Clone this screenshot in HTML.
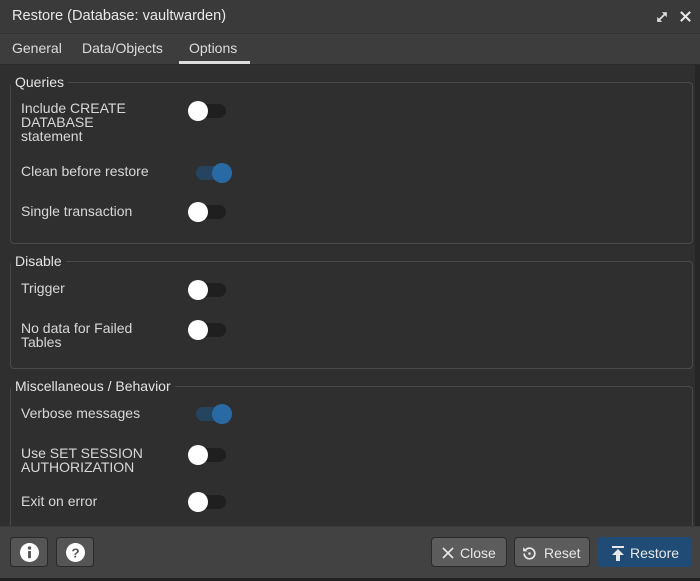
<!DOCTYPE html><html><head><style>
body{margin:0;width:700px;height:581px;background:#222;font-family:"Liberation Sans",sans-serif;color:#ddd;overflow:hidden;position:relative}
.a{position:absolute}
.fs{position:absolute;left:10px;width:681px;border:1px solid #4a4a4a;border-radius:4px}
.lg{position:absolute;background:#2f2f2f;padding:0 4px;left:0px;font-size:14px;color:#e4e4e4}
.lb{position:absolute;left:21px;font-size:14px;line-height:14px;color:#d8d8d8}
.t{position:absolute;left:190px;width:36px;height:14px;border-radius:7px;background:#1f1f1f}
.t:after{content:"";position:absolute;left:-2px;top:-3px;width:20px;height:20px;border-radius:50%;background:#fff}
.on{left:196px;background:#24445f}
.on:after{left:16px;background:#2a6aa4}
.btn{position:absolute;top:537px;height:30px;border-radius:4px;border:1px solid #2a2a2a;background:#5c5c5c;color:#e8e8e8;font-size:14px;line-height:30px;box-sizing:border-box}
</style></head><body>
<div class="a" style="left:0;top:0;width:700px;height:33px;background:#3a3a3a;border-bottom:1px solid #333"></div>
<div class="a" style="left:12px;top:8px;font-size:14.6px;color:#e8e8e8">Restore (Database: vaultwarden)</div>
<svg class="a" style="left:655px;top:10px" width="14" height="14" viewBox="0 0 16 16" stroke="#ddd" stroke-width="2" fill="#ddd"><path d="M3 13L13 3" /><path d="M9 3h4v4z M3 9v4h4z" stroke-width="1"/></svg>
<svg class="a" style="left:680px;top:11px" width="11" height="11" viewBox="0 0 13 13" stroke="#e8e8e8" stroke-width="2.4"><path d="M1 1L12 12M12 1L1 12"/></svg>
<div class="a" style="left:0;top:34px;width:700px;height:30px;background:#3d3d3d;border-bottom:1px solid #2a2a2a"></div>
<div class="a" style="left:12px;top:40px;font-size:14px;color:#ddd">General</div>
<div class="a" style="left:82px;top:40px;font-size:14px;color:#ddd">Data/Objects</div>
<div class="a" style="left:189px;top:40px;font-size:14px;color:#ddd">Options</div>
<div class="a" style="left:179px;top:61px;width:71px;height:3px;background:#ddd"></div>
<div class="a" style="left:0;top:65px;width:695px;height:462px;background:#2f2f2f"></div>
<div class="a" style="left:695px;top:65px;width:5px;height:462px;background:#262626"></div>

<div class="fs" style="top:82px;height:160px"></div><div class="lg" style="left:11px;top:74px">Queries</div>
<div class="lb" style="top:101px">Include CREATE<br>DATABASE<br>statement</div><div class="t" style="top:104px"></div>
<div class="lb" style="top:164px">Clean before restore</div><div class="t on" style="top:166px"></div>
<div class="lb" style="top:204px">Single transaction</div><div class="t" style="top:205px"></div>

<div class="fs" style="top:261px;height:106px"></div><div class="lg" style="left:11px;top:253px">Disable</div>
<div class="lb" style="top:281px">Trigger</div><div class="t" style="top:283px"></div>
<div class="lb" style="top:321px">No data for Failed<br>Tables</div><div class="t" style="top:323px"></div>

<div class="fs" style="top:386px;height:150px"></div><div class="lg" style="left:11px;top:378px">Miscellaneous / Behavior</div>
<div class="lb" style="top:406px">Verbose messages</div><div class="t on" style="top:407px"></div>
<div class="lb" style="top:446px">Use SET SESSION<br>AUTHORIZATION</div><div class="t" style="top:448px"></div>
<div class="lb" style="top:494px">Exit on error</div><div class="t" style="top:495px"></div>

<div class="a" style="left:0;top:526px;width:700px;height:52px;background:#424242;border-top:1px solid #3a3a3a"></div>
<div class="a" style="left:0;top:578px;width:700px;height:3px;background:#222"></div>
<div class="btn" style="left:10px;width:38px;background:#555"><svg style="position:absolute;left:9px;top:5px" width="19" height="19" viewBox="0 0 20 20"><circle cx="10" cy="10" r="10" fill="#fff"/><rect x="8.5" y="8.5" width="3" height="7.5" fill="#555"/><circle cx="10" cy="5.3" r="1.8" fill="#555"/></svg></div>
<div class="btn" style="left:56px;width:38px;background:#555"><svg style="position:absolute;left:9px;top:5px" width="19" height="19" viewBox="0 0 20 20"><circle cx="10" cy="10" r="10" fill="#fff"/><text x="10" y="15" font-size="14" font-weight="bold" text-anchor="middle" fill="#555" font-family="Liberation Sans">?</text></svg></div>
<div class="btn" style="left:431px;width:76px;padding-left:28px"><svg style="position:absolute;left:10px;top:9px" width="12" height="12" viewBox="0 0 12 12" stroke="#e8e8e8" stroke-width="1.6"><path d="M1 1L11 11M11 1L1 11"/></svg>Close</div>
<div class="btn" style="left:514px;width:76px;padding-left:29px"><svg style="position:absolute;left:6px;top:7px" width="17" height="17" viewBox="0 0 16 16" fill="none" stroke="#e8e8e8" stroke-width="1.6"><path d="M3 8a5 5 0 1 0 1.5-3.6"/><path d="M2 2v4h4" fill="#e8e8e8" stroke="none"/><circle cx="8" cy="8" r="1.2" fill="#e8e8e8" stroke="none"/></svg>Reset</div>
<div class="btn" style="left:597px;width:95px;padding-left:32px;background:#1f4b74;border-color:#1f4b74"><svg style="position:absolute;left:13px;top:8px" width="14" height="15" viewBox="0 0 14 15" fill="#e8e8e8"><rect x="1" y="0" width="12" height="2"/><path d="M7 3L1 9h4v6h4V9h4z"/></svg>Restore</div>
</body></html>
